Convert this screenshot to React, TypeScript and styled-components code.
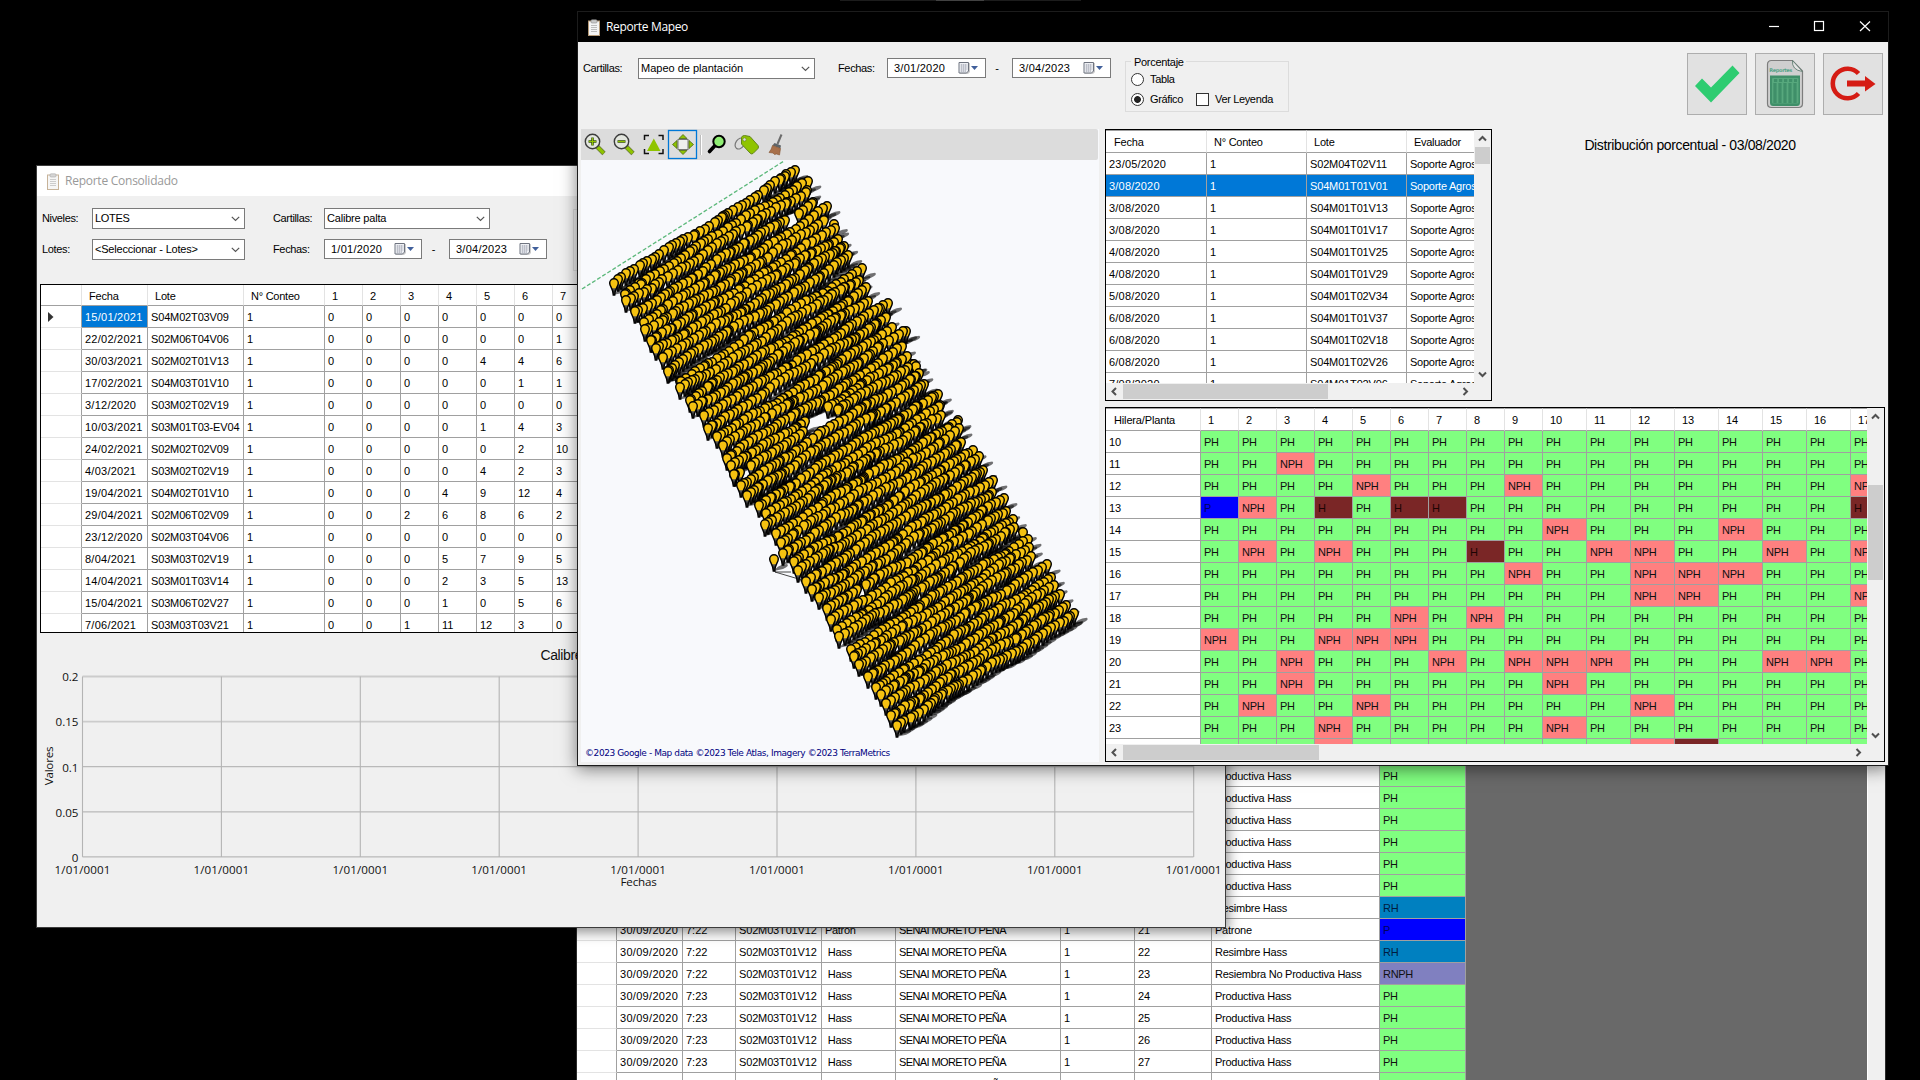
import React from "react";
import styled, { createGlobalStyle, css } from "styled-components";

const Global = createGlobalStyle`
  *, *::before, *::after { box-sizing: border-box; }
  html, body { margin: 0; padding: 0; background: #000; }
  body { overflow: hidden; font-family: "Liberation Sans", Arial, sans-serif; font-size: 11px; color: #000; }
`;

const Desktop = styled.div`
  position: relative;
  width: 1920px;
  height: 1080px;
  overflow: hidden;
  background: #000;
`;

const ScreenHandle = styled.div`
  position: absolute;
  left: 840px;
  top: 0;
  width: 241px;
  height: 1px;
  background: linear-gradient(90deg, #1d1d1d 96px, #444 96px, #444 144px, #1d1d1d 144px);
`;

/* ---------- windows ---------- */

const Window = styled.section<{ $x: number; $y: number; $w: number; $h: number; $edge: string; $shadow?: string }>`
  position: absolute;
  left: ${(p) => p.$x}px;
  top: ${(p) => p.$y}px;
  width: ${(p) => p.$w}px;
  height: ${(p) => p.$h}px;
  display: flex;
  flex-direction: column;
  background: #f0f0f0;
  border: 1px solid ${(p) => p.$edge};
  box-shadow: ${(p) => p.$shadow ?? "none"};
`;

const TitleBar = styled.header<{ $dark?: boolean }>`
  display: flex;
  align-items: center;
  flex: none;
  height: 30px;
  padding-left: 10px;
  gap: 7px;
  background: ${(p) => (p.$dark ? "#000" : "#fff")};
  color: ${(p) => (p.$dark ? "#fff" : "#999")};
  font: 12px "Open Sans", "Noto Sans", sans-serif;
`;

const TitleText = styled.span<{ $ls: number }>`
  margin-left: -1px;
  letter-spacing: ${(p) => p.$ls}px;
  line-height: 16px;
`;

const Caption = styled.div`
  display: flex;
  margin-left: auto;
  svg { display: block; width: 46px; height: 30px; }
`;

const ClipboardSvg = styled.svg<{ $faded?: boolean }>`
  width: 12px;
  height: 17px;
  opacity: ${(p) => (p.$faded ? 0.75 : 1)};
`;

function Clipboard({ faded }: { faded?: boolean }) {
  return (
    <ClipboardSvg $faded={faded} viewBox="0 0 12 17">
      <rect x="0.5" y="2" width="11" height="14.5" fill="#f4f4f4" stroke="#b59a78" />
      <rect x="3" y="0.8" width="6" height="3.2" rx="1" fill="#c9c9c9" stroke="#8b8b8b" strokeWidth="0.6" />
      <path d="M3 6.5h6M3 8.5h6M3 10.5h6M3 12.5h6" stroke="#b5b5b5" strokeWidth="0.9" />
    </ClipboardSvg>
  );
}

/* ---------- form controls ---------- */

const Label = styled.span<{ $w: number; $ls?: number }>`
  flex: none;
  width: ${(p) => p.$w}px;
  line-height: 21px;
  white-space: nowrap;
  letter-spacing: ${(p) => p.$ls ?? -0.35}px;
`;

const ComboBox = styled.div<{ $w: number }>`
  flex: none;
  display: flex;
  align-items: center;
  justify-content: space-between;
  width: ${(p) => p.$w}px;
  height: 21px;
  padding: 0 4px 1px 2px;
  background: #fff;
  border: 1px solid #7a7a7a;
  white-space: nowrap;
  svg { width: 9px; height: 6px; margin-top: 2px; }
`;

const Tight = styled.span<{ $ls: number }>`
  letter-spacing: ${(p) => p.$ls}px;
`;

function Combo({ w, ls = 0, children }: { w: number; ls?: number; children: string }) {
  return (
    <ComboBox $w={w}>
      <Tight $ls={ls}>{children}</Tight>
      <svg viewBox="0 0 9 6"><path d="M0.8 0.8L4.5 4.5L8.2 0.8" fill="none" stroke="#555" strokeWidth="1.2" /></svg>
    </ComboBox>
  );
}

const DateBox = styled.div<{ $w: number }>`
  flex: none;
  display: flex;
  align-items: center;
  width: ${(p) => p.$w}px;
  height: 20px;
  padding: 0 6px 0 6px;
  background: #fff;
  border: 1px solid #7a7a7a;
  letter-spacing: 0.25px;
  svg { margin-left: auto; width: 21px; height: 14px; }
`;

function DatePicker({ w, children }: { w: number; children: string }) {
  return (
    <DateBox $w={w}>
      {children}
      <svg viewBox="0 0 21 14">
        <path d="M2 2h10v9l-2 2H2z" fill="#aaa" opacity="0.6" />
        <path d="M1 1.5h9.5v8.5l-2 2H1z" fill="#eef0f4" stroke="#6f7480" />
        <path d="M2.5 4h7M2.5 6h7M2.5 8h7M2.5 10h5M3.5 3v8M5.5 3v8M7.5 3v8" stroke="#a7acb9" strokeWidth="0.6" />
        <path d="M13 5h7l-3.5 4z" fill="#41609b" />
      </svg>
    </DateBox>
  );
}

const Dash = styled.span<{ $w: number }>`
  flex: none;
  width: ${(p) => p.$w}px;
  line-height: 20px;
  text-align: center;
  padding-right: 4px;
`;

const GroupBox = styled.div`
  flex: none;
  width: 164px;
  height: 51px;
  margin: 3px 0 0 14px;
  padding: 0 5px;
  border: 1px solid #dcdcdc;
`;

const Legend = styled.div`
  width: fit-content;
  height: 11px;
  line-height: 13px;
  margin-top: -6px;
  padding: 0 2px 0 3px;
  background: #f0f0f0;
  letter-spacing: -0.3px;
`;

const OptionRow = styled.div<{ $top: number }>`
  display: flex;
  align-items: center;
  height: 14px;
  margin-top: ${(p) => p.$top}px;
  letter-spacing: -0.35px;
`;

const Radio = styled.span<{ $on?: boolean }>`
  width: 13px;
  height: 13px;
  margin-right: 6px;
  border: 1px solid #333;
  border-radius: 50%;
  background: ${(p) => (p.$on ? "radial-gradient(circle, #222 3px, #fff 3.8px)" : "#fff")};
`;

const CheckBox = styled.span`
  width: 13px;
  height: 13px;
  margin: 0 6px 0 13px;
  border: 1px solid #333;
  background: #fff;
`;

const Actions = styled.div`
  display: flex;
  gap: 8px;
  margin: -5px 5px 0 auto;
`;

const ActionButton = styled.div`
  width: 60px;
  height: 62px;
  background: #e1e1e1;
  border: 1px solid #adadad;
  svg { display: block; width: 58px; height: 60px; }
`;

/* ---------- data grids ---------- */

const GridFrame = styled.div<{ $w: number; $h: number }>`
  flex: none;
  display: grid;
  grid-template-columns: minmax(0, 1fr) auto;
  grid-template-rows: minmax(0, 1fr) auto;
  width: ${(p) => p.$w}px;
  height: ${(p) => p.$h}px;
  border: 1px solid #000;
  background: #f0f0f0;
`;

const Rows = styled.div`
  overflow: hidden;
  background: #fff;
`;

const Row = styled.div<{ $cols: string; $h?: number }>`
  display: grid;
  grid-template-columns: ${(p) => p.$cols};
  height: ${(p) => p.$h ?? 22}px;
`;

const Cell = styled.div<{ $bg?: string; $fg?: string; $ls?: number; $pad?: number; $blank?: boolean }>`
  overflow: hidden;
  padding-left: ${(p) => p.$pad ?? 3}px;
  line-height: 23px;
  white-space: pre;
  border-right: 1px solid #a0a0a0;
  border-bottom: 1px solid ${(p) => (p.$blank ? "#e3e3e3" : "#a0a0a0")};
  background: ${(p) => p.$bg ?? "#fff"};
  color: ${(p) => p.$fg ?? "#000"};
  letter-spacing: ${(p) => p.$ls ?? 0}px;
`;

const HeadCell = styled(Cell)<{ $top?: boolean }>`
  padding-left: ${(p) => p.$pad ?? 7}px;
  border-right-color: #e3e3e3;
  ${(p) => p.$top && css`border-top: 1px solid #a0a0a0;`}
`;

const ScrollV = styled.div`
  display: flex;
  flex-direction: column;
  align-items: center;
  width: 17px;
  padding-right: 1px;
  background: #f0f0f0;
`;
const ScrollH = styled.div`
  display: flex;
  align-items: center;
  height: 17px;
  padding-bottom: 1px;
  grid-column: 1;
`;
const ThumbV = styled.div<{ $top: number; $len: number }>`
  width: 15px;
  height: ${(p) => p.$len}px;
  margin-top: ${(p) => p.$top}px;
  background: #cdcdcd;
`;
const ThumbH = styled.div<{ $len: number }>`
  width: ${(p) => p.$len}px;
  height: 15px;
  background: #cdcdcd;
`;
const ArrowSvg = styled.svg<{ $end?: boolean }>`
  flex: none;
  width: 17px;
  height: 17px;
  ${(p) => p.$end && css`margin-top: auto;`}
`;
const ArrowRight = styled(ArrowSvg)`
  margin-left: auto;
`;

const Chevron = (d: string) => <path d={d} fill="none" stroke="#505050" strokeWidth="2" />;
const UP = "M5 10.5L8.5 7L12 10.5";
const DOWN = "M5 6.5L8.5 10L12 6.5";
const LEFT = "M10 5L6.5 8.5L10 12";
const RIGHT = "M6.5 5L10 8.5L6.5 12";

function VBar({ top, len }: { top: number; len: number }) {
  return (
    <ScrollV>
      <ArrowSvg viewBox="0 0 17 17">{Chevron(UP)}</ArrowSvg>
      <ThumbV $top={top} $len={len} />
      <ArrowSvg $end viewBox="0 0 17 17">{Chevron(DOWN)}</ArrowSvg>
    </ScrollV>
  );
}
function HBar({ len }: { len: number }) {
  return (
    <ScrollH>
      <ArrowSvg viewBox="0 0 17 17">{Chevron(LEFT)}</ArrowSvg>
      <ThumbH $len={len} />
      <ArrowRight viewBox="0 0 17 17">{Chevron(RIGHT)}</ArrowRight>
    </ScrollH>
  );
}

/* ---------- detail window (back) ---------- */

const GREEN = "#80ff80";
const CODE_COLORS: Record<string, string> = {
  PH: GREEN, NPH: "#ff8080", H: "#7a2626", P: "#0000ff", RH: "#0080c0", RNPH: "#8080c0",
};
const codeText = (c: string) => (c === "P" ? "#000060" : c === "H" ? "#1c0404" : c === "RH" ? "#001c40" : "#101010");

const DETAIL_COLS = "40px 66px 53px 86px 74px 165px 74px 77px 168px 86px";
const detail: [string, string, string, string, string][] = [
  ["7:22", " Hass", "14", "Productiva Hass", "PH"],
  ["7:22", " Hass", "15", "Productiva Hass", "PH"],
  ["7:22", " Hass", "16", "Productiva Hass", "PH"],
  ["7:22", " Hass", "17", "Productiva Hass", "PH"],
  ["7:22", " Hass", "18", "Productiva Hass", "PH"],
  ["7:22", " Hass", "19", "Productiva Hass", "PH"],
  ["7:22", " Hass", "20", "Resimbre Hass", "RH"],
  ["7:22", "Patron", "21", "Patrone", "P"],
  ["7:22", " Hass", "22", "Resimbre Hass", "RH"],
  ["7:22", " Hass", "23", "Resiembra No Productiva Hass", "RNPH"],
  ["7:23", " Hass", "24", "Productiva Hass", "PH"],
  ["7:23", " Hass", "25", "Productiva Hass", "PH"],
  ["7:23", " Hass", "26", "Productiva Hass", "PH"],
  ["7:23", " Hass", "27", "Productiva Hass", "PH"],
  ["7:23", " Hass", "28", "Productiva Hass", "PH"],
];

const DetailBody = styled.div`
  flex: none;
  width: 1291px;
  height: 336px;
  margin-top: 24px;
  overflow: hidden;
  background: #696969;
  border-right: 1px solid #fff;
`;

function DetailWindow() {
  return (
    <Window $x={576} $y={740} $w={1310} $h={362} $edge="#2b2b2b">
      <DetailBody>
        {detail.map(([time, kind, plant, state, code]) => (
          <Row key={plant} $cols={DETAIL_COLS}>
            <Cell $blank />
            <Cell $ls={0.3}>30/09/2020</Cell>
            <Cell>{time}</Cell>
            <Cell $ls={-0.15}>S02M03T01V12</Cell>
            <Cell $ls={-0.3}>{kind}</Cell>
            <Cell $ls={-0.6}>SENAI MORETO PEÑA</Cell>
            <Cell>1</Cell>
            <Cell>{plant}</Cell>
            <Cell $ls={-0.25}>{state}</Cell>
            <Cell $bg={CODE_COLORS[code]} $fg={codeText(code)} $ls={-0.3}>{code}</Cell>
          </Row>
        ))}
      </DetailBody>
    </Window>
  );
}

/* ---------- consolidated window (middle) ---------- */

const CONS_COLS = "41px 66px 96px 81px repeat(8, 38px)";
const consolidated: [string, string, number[]][] = [
  ["15/01/2021", "S04M02T03V09", [0, 0, 0, 0, 0, 0, 0]],
  ["22/02/2021", "S02M06T04V06", [0, 0, 0, 0, 0, 0, 1]],
  ["30/03/2021", "S02M02T01V13", [0, 0, 0, 0, 4, 4, 6]],
  ["17/02/2021", "S04M03T01V10", [0, 0, 0, 0, 0, 1, 1]],
  ["3/12/2020", "S03M02T02V19", [0, 0, 0, 0, 0, 0, 0]],
  ["10/03/2021", "S03M01T03-EV04", [0, 0, 0, 0, 1, 4, 3]],
  ["24/02/2021", "S02M02T02V09", [0, 0, 0, 0, 0, 2, 10]],
  ["4/03/2021", "S03M02T02V19", [0, 0, 0, 0, 4, 2, 3]],
  ["19/04/2021", "S04M02T01V10", [0, 0, 0, 4, 9, 12, 4]],
  ["29/04/2021", "S02M06T02V09", [0, 0, 2, 6, 8, 6, 2]],
  ["23/12/2020", "S02M03T04V06", [0, 0, 0, 0, 0, 0, 0]],
  ["8/04/2021", "S03M03T02V19", [0, 0, 0, 5, 7, 9, 5]],
  ["14/04/2021", "S03M01T03V14", [0, 0, 0, 2, 3, 5, 13]],
  ["15/04/2021", "S03M06T02V27", [0, 0, 0, 1, 0, 5, 6]],
  ["7/06/2021", "S03M03T03V21", [0, 0, 1, 11, 12, 3, 0]],
];

const Filters = styled.div`
  display: grid;
  grid-template-columns: 50px 153px 28px 51px 1fr;
  grid-template-rows: 21px 21px;
  row-gap: 10px;
  height: 88px;
  padding: 12px 0 0 5px;
`;
const Line = styled.div`
  display: flex;
`;
const ConsTable = styled.div`
  flex: none;
  width: 560px;
  height: 349px;
  margin-left: 3px;
  border: 1px solid #000;
  background: #fff;
  overflow: hidden;
`;
const Pointer = styled.svg`
  display: block;
  width: 6px;
  height: 10px;
  margin: 6px 0 0 4px;
`;
const ChartSvg = styled.svg`
  display: block;
  width: 1187px;
  height: 292px;
  text { font-family: "Open Sans", sans-serif; font-size: 11.6px; fill: #111; }
`;
const SidePanel = styled.div`
  width: 200px;
  height: 62px;
  margin: -30px 0 0 26px;
  border: 1px solid #dcdcdc;
`;

function Chart() {
  const x0 = 45.5;
  const y0 = 43.5;
  const labels = ["0.2", "0.15", "0.1", "0.05", "0"];
  return (
    <ChartSvg viewBox="0 0 1187 292">
      {labels.map((t, i) => (
        <g key={t}>
          <path d={`M${x0} ${y0 + i * 45.1}H1156.5`} stroke={i < 2 ? "#ccc" : "#b9b9b9"} strokeWidth={i < 2 ? 1.8 : 1.2} />
          <text x="41.5" y={y0 + i * 45.1 + 4.8} textAnchor="end">{t}</text>
        </g>
      ))}
      {Array.from({ length: 9 }, (_, i) => (
        <g key={i}>
          <path d={`M${x0 + i * 138.9} ${y0}V${y0 + 180.4}`} stroke="#b4b4b4" strokeWidth="1.1" />
          <text x={x0 + i * 138.9} y="241" textAnchor="middle" letterSpacing="0.1">1/01/0001</text>
        </g>
      ))}
      <text x="601.5" y="253" textAnchor="middle" letterSpacing="-0.2">Fechas</text>
      <text transform="translate(16 133) rotate(-90)" textAnchor="middle" letterSpacing="-0.2">Valores</text>
      <text x="503.5" y="27" style={{ fontFamily: "Liberation Sans", fontSize: 14 }} letterSpacing="-0.4">Calibre palta</text>
    </ChartSvg>
  );
}

function ConsolidatedWindow() {
  return (
    <Window $x={36} $y={165} $w={1190} $h={763} $edge="#3c3c3c" $shadow="2px 4px 12px rgba(0,0,0,.45)">
      <TitleBar>
        <Clipboard faded />
        <TitleText $ls={-0.25}>Reporte Consolidado</TitleText>
      </TitleBar>
      <Filters>
        <Label $w={49}>Niveles:</Label>
        <Combo w={153} ls={-0.3}>LOTES</Combo>
        <span />
        <Label $w={51}>Cartillas:</Label>
        <Line><Combo w={166} ls={-0.2}>Calibre palta</Combo></Line>
        <Label $w={49}>Lotes:</Label>
        <Combo w={153} ls={-0.2}>{"<Seleccionar - Lotes>"}</Combo>
        <span />
        <Label $w={51}>Fechas:</Label>
        <Line>
          <DatePicker w={98}>1/01/2020</DatePicker>
          <Dash $w={27}>-</Dash>
          <DatePicker w={98}>3/04/2023</DatePicker>
          <SidePanel />
        </Line>
      </Filters>
      <ConsTable>
        <Row $cols={CONS_COLS} $h={21}>
          <HeadCell />
          <HeadCell $ls={-0.2}>Fecha</HeadCell>
          <HeadCell $ls={-0.2}>Lote</HeadCell>
          <HeadCell $ls={-0.25}>N° Conteo</HeadCell>
          {["1", "2", "3", "4", "5", "6", "7", "8"].map((n) => <HeadCell key={n}>{n}</HeadCell>)}
        </Row>
        {consolidated.map(([date, lot, values], i) => (
          <Row key={i} $cols={CONS_COLS}>
            <Cell $blank>{i === 0 && <Pointer viewBox="0 0 6 10"><path d="M0 0L5.5 5L0 10z" fill="#333" /></Pointer>}</Cell>
            <Cell $bg={i === 0 ? "#0078d7" : undefined} $fg={i === 0 ? "#fff" : undefined} $ls={0.25}>{date}</Cell>
            <Cell $ls={-0.15}>{lot}</Cell>
            <Cell>1</Cell>
            {values.map((v, k) => <Cell key={k}>{String(v)}</Cell>)}
            <Cell>0</Cell>
          </Row>
        ))}
      </ConsTable>
      <Chart />
    </Window>
  );
}

/* ---------- map ---------- */

function seeded(seed: number) {
  let s = seed;
  return () => {
    s = (s * 1664525 + 1013904223) % 4294967296;
    return s / 4294967296;
  };
}

/* Pin heads, in map coordinates (origin at the top left of the drawing area). */
function buildPins() {
  const rnd = seeded(77);
  const pins: { x: number; y: number }[] = [];
  const rows = 47;
  const holes: [number, number, number, number][] = [
    [240, 259, 19, 8], [282, 430, 4, 4], [399, 373, 4, 4], [211, 55, 4, 4], [337, 440, 4, 4], [163, 308, 6, 4],
  ];
  for (let r = 0; r < rows; r++) {
    const t = r / (rows - 1);
    const lx = 35 + t * 281 + (rnd() - 0.5) * 8;
    const ly = 123 + t * 441 + (rnd() - 0.5) * 2.5;
    const len = 0.985 + rnd() * 0.045;
    const dx = (182 - 7 * t) * len;
    const dy = -(112 - 2 * t) * len;
    const wave = rnd() * 6;
    let u = 0;
    while (u <= 1) {
      const x = lx + dx * u;
      const y = ly + dy * u + Math.sin(u * 8 + wave) * 1.6 + Math.sin(u * 23 + wave * 3) * 0.9 + (rnd() - 0.5) * 1.2;
      const a = 0.53;
      const hit = holes.some(([hx, hy, rx, ry]) => {
        const px = (x - hx) * Math.cos(a) - (y - hy) * Math.sin(a);
        const py = (x - hx) * Math.sin(a) + (y - hy) * Math.cos(a);
        return (px / rx) ** 2 + (py / ry) ** 2 < 1;
      });
      if (!hit) pins.push({ x, y });
      u += rnd() < 0.12 ? 0.006 : 0.016 + rnd() * 0.014;
    }
  }
  pins.push({ x: 193, y: 399 });
  pins.push({ x: 335, y: 206 });
  pins.push({ x: 253, y: 64 });
  pins.push({ x: 442, y: 372 });
  return pins.sort((p, q) => p.y - q.y);
}
const pins = buildPins();

const MapPanel = styled.div`
  flex: none;
  display: flex;
  flex-direction: column;
  width: 518px;
  height: 633px;
  background: #f8f9fc;
`;
const ToolStrip = styled.div`
  display: flex;
  align-items: center;
  flex: none;
  width: 517px;
  height: 31px;
  background: #dcdcdc;
  border-radius: 0 2px 2px 0;
`;
const Tools = styled.svg`
  display: block;
  width: 220px;
  height: 31px;
`;
const MapSvg = styled.svg`
  display: block;
  flex: none;
  width: 518px;
  height: 585px;
`;
const Copyright = styled.div`
  padding-left: 4px;
  color: #000080;
  font: 9px/16px "DejaVu Sans", sans-serif;
  letter-spacing: -0.42px;
  white-space: nowrap;
`;

function MapView() {
  return (
    <MapPanel>
      <ToolStrip>
        <Tools viewBox="0 0 220 31">
          {[0, 29].map((dx) => (
            <g key={dx} transform={`translate(${dx} 0)`}>
              <path d="M15 16.5L23 24.5" stroke="#6b7a3a" strokeWidth="4.6" />
              <path d="M15.5 17L22.6 24.1" stroke="#8fc400" strokeWidth="3.2" />
              <circle cx="11.5" cy="12.5" r="7.2" fill="#e3e6df" stroke="#3c3c3c" strokeWidth="1.4" />
              <path d={dx ? "M7.5 12.5h8" : "M7.5 12.5h8M11.5 8.5v8"} stroke="#3f5a12" strokeWidth="2.6" />
              <path d={dx ? "M8 12.5h7" : "M8 12.5h7M11.5 9v7"} stroke="#8fc400" strokeWidth="1" />
            </g>
          ))}
          <path d="M68 6.5h-4.5V11M77.500 6.500h4.500V11M68 24.500h-4.500V20M77.500 24.500h4.500V20" fill="none" stroke="#111" strokeWidth="1.5" />
          <path d="M72.800 9.500L79.500 22H66z" fill="#8fc400" />
          <rect x="87.500" y="1.500" width="28" height="28" fill="#dedede" stroke="#0078d7" strokeWidth="1.3" />
          <rect x="97" y="10.500" width="10" height="10" fill="#eee" stroke="#777" strokeWidth="1" />
          <path d="M98 9.500L102 5.500l4 4zM98 21.500l4 4 4-4zM96 11.500l-4.500 4 4.500 4zM108 11.500l4.500 4-4.500 4z" fill="#8fc400" stroke="#4d6618" strokeWidth="0.8" />
          <path d="M119.500 6v20" stroke="#bdbdbd" />
          <path d="M120.500 6v20" stroke="#fff" />
          <path d="M134.500 16L128.500 22.500" stroke="#000" strokeWidth="3.6" strokeLinecap="round" />
          <circle cx="138" cy="12.500" r="5.700" fill="#90ee74" stroke="#000" strokeWidth="2" />
          <ellipse cx="159" cy="14.500" rx="4.300" ry="6" transform="rotate(35 159 14.500)" fill="none" stroke="#777" strokeWidth="1.200" />
          <path d="M160.500 8.500Q161 6.500 163.500 6.500L169 7.500L177 16.500Q178 18 177 19.500L172 24.500Q170.500 25.500 169 24L160.500 15z" fill="#8fc400" stroke="#64861a" strokeWidth="1" />
          <circle cx="163.500" cy="10.500" r="1.700" fill="#dcdcdc" stroke="#64861a" strokeWidth="0.700" />
          <path d="M200.500 5.500L196.500 15" stroke="#6b6b6b" strokeWidth="2" />
          <path d="M193.500 14l6.500 2.500-.6 3-8-3z" fill="#5e6468" />
          <path d="M191.500 16.500l8 3-1 6.500-3-1-2 .5-1.500-1.500-4-.5q2.500-3 3.500-7z" fill="#a8704a" stroke="#83532f" strokeWidth="0.600" />
        </Tools>
      </ToolStrip>
      <MapSvg viewBox="0 0 518 585">
        <defs>
          <linearGradient id="tail" x1="0" y1="0" x2="0" y2="1">
            <stop offset="0.55" stopColor="#f5c211" />
            <stop offset="0.62" stopColor="#555" />
            <stop offset="1" stopColor="#111" />
          </linearGradient>
          <filter id="soft" x="-30%" y="-60%" width="160%" height="220%">
            <feGaussianBlur stdDeviation="0.7" />
          </filter>
          <symbol id="pin" overflow="visible">
            <path d="M-4.300 0A4.300 4.300 0 1 1 4.300 0C4.300 3.800 .9 5 .7 12H-.7C-.9 5-4.300 3.800-4.300 0Z" fill="url(#tail)" stroke="#000" strokeWidth="1.450" />
          </symbol>
        </defs>
        <path d="M1 129L203 1" stroke="#5bb87a" strokeWidth="1.300" strokeDasharray="4 2" />
        <g filter="url(#soft)">
          {pins.map((p, i) => (
            <path key={i} d={`M${p.x.toFixed(1)} ${(p.y + 12).toFixed(1)}q3-6 13-7q3 2-4 5z`} fill="#000" opacity="0.55" />
          ))}
        </g>
        <path d="M193 405L194 412L221 420M194 412h16M60 160l16 22M170 340l14 16M280 507l12 16" stroke="#333" strokeWidth="0.900" fill="none" />
        {pins.map((p, i) => (
          <use key={i} href="#pin" x={Math.round(p.x)} y={Math.round(p.y)} />
        ))}
      </MapSvg>
      <Copyright>©2023 Google - Map data ©2023 Tele Atlas, Imagery ©2023 TerraMetrics</Copyright>
    </MapPanel>
  );
}

/* ---------- mapping window (front) ---------- */

const VISIT_COLS = "101px 100px 100px 100px";
const visits: [string, string][] = [
  ["23/05/2020", "S02M04T02V11"],
  ["3/08/2020", "S04M01T01V01"],
  ["3/08/2020", "S04M01T01V13"],
  ["3/08/2020", "S04M01T01V17"],
  ["4/08/2020", "S04M01T01V25"],
  ["4/08/2020", "S04M01T01V29"],
  ["5/08/2020", "S04M01T02V34"],
  ["6/08/2020", "S04M01T01V37"],
  ["6/08/2020", "S04M01T02V18"],
  ["6/08/2020", "S04M01T02V26"],
  ["7/08/2020", "S04M01T02V06"],
];

const PLANT_COLS = "95px repeat(9, 38px) repeat(8, 44px)";
/* Cells that differ from a productive plant, by row: column number -> code. */
const exceptions: Record<number, Record<number, string>> = {
  10: {},
  11: { 3: "NPH" },
  12: { 5: "NPH", 9: "NPH", 17: "NPH" },
  13: { 1: "P", 2: "NPH", 4: "H", 6: "H", 7: "H", 17: "H" },
  14: { 10: "NPH", 14: "NPH" },
  15: { 2: "NPH", 4: "NPH", 8: "H", 11: "NPH", 12: "NPH", 15: "NPH", 17: "NPH" },
  16: { 9: "NPH", 12: "NPH", 13: "NPH", 14: "NPH" },
  17: { 12: "NPH", 13: "NPH", 17: "NPH" },
  18: { 6: "NPH", 8: "NPH" },
  19: { 1: "NPH", 4: "NPH", 5: "NPH", 6: "NPH" },
  20: { 3: "NPH", 7: "NPH", 9: "NPH", 10: "NPH", 11: "NPH", 15: "NPH", 16: "NPH" },
  21: { 3: "NPH", 10: "NPH" },
  22: { 2: "NPH", 5: "NPH", 12: "NPH" },
  23: { 4: "NPH", 10: "NPH" },
  24: { 4: "NPH", 12: "NPH", 13: "H" },
};

const TopArea = styled.div`
  display: flex;
  flex: none;
  height: 87px;
  padding: 16px 0 0 5px;
`;
const Gap = styled.span<{ $w: number }>`
  flex: none;
  width: ${(p) => p.$w}px;
`;
const Content = styled.div`
  display: flex;
  gap: 6px;
  padding-left: 3px;
`;
const RightColumn = styled.div`
  display: flex;
  flex-direction: column;
  gap: 6px;
  width: 783px;
`;
const Upper = styled.div`
  display: flex;
`;
const PieTitle = styled.div`
  flex: 1;
  padding-top: 8px;
  text-align: center;
  font-size: 14px;
  line-height: 16px;
  letter-spacing: -0.38px;
`;

function MappingWindow() {
  const plants = Array.from({ length: 17 }, (_, i) => i + 1);
  return (
    <Window $x={577} $y={11} $w={1312} $h={755} $edge="#1c1c1c" $shadow="0 3px 16px rgba(0,0,0,.5)">
      <TitleBar $dark>
        <Clipboard />
        <TitleText $ls={-0.35}>Reporte Mapeo</TitleText>
        <Caption>
          <svg viewBox="0 0 46 30"><path d="M19 14.500h10" stroke="#fff" strokeWidth="1.200" /></svg>
          <svg viewBox="0 0 46 30"><rect x="18.500" y="9.500" width="9" height="9" fill="none" stroke="#fff" strokeWidth="1.200" /></svg>
          <svg viewBox="0 0 46 30"><path d="M18 9.500l10 9.500M28 9.500l-10 9.500" stroke="#fff" strokeWidth="1.200" /></svg>
        </Caption>
      </TitleBar>
      <TopArea>
        <Label $w={55}>Cartillas:</Label>
        <Combo w={177}>Mapeo de plantación</Combo>
        <Gap $w={23} />
        <Label $w={49}>Fechas:</Label>
        <DatePicker w={99}>3/01/2020</DatePicker>
        <Dash $w={26}>-</Dash>
        <DatePicker w={99}>3/04/2023</DatePicker>
        <GroupBox>
          <Legend>Porcentaje</Legend>
          <OptionRow $top={5}><Radio />Tabla</OptionRow>
          <OptionRow $top={6}><Radio $on />Gráfico<CheckBox />Ver Leyenda</OptionRow>
        </GroupBox>
        <Actions>
          <ActionButton>
            <svg viewBox="0 0 58 60"><path d="M7 32l7-7.500L23 33.500L44.500 11.500L51.500 19L23 48.500z" fill="#2ecc71" /></svg>
          </ActionButton>
          <ActionButton>
            <svg viewBox="0 0 58 60">
              <path d="M15.500 6.500H36.500L46.500 17V49.500Q46.500 53.500 42.500 53.500H15.500Q11.500 53.500 11.500 49.500V10.500Q11.500 6.500 15.500 6.500Z" fill="#cfcfcf" stroke="#7d7d7d" strokeWidth="1.200" />
              <path d="M36.500 6.500Q35.500 16 46.500 17.500z" fill="#e4e4e4" stroke="#5e7d70" strokeWidth="0.900" />
              <path d="M14 21.500H44V48.500Q44 52 41 52H17Q14 52 14 48.500z" fill="#3f8f69" />
              <rect x="16" y="24" width="26.500" height="25.500" rx="1" fill="#57a87d" />
              <path d="M18 29v20M23 29v20M28 29v20M33 29v20M38 29v20" stroke="#3f8f69" strokeWidth="3.200" transform="translate(1 0)" />
              <path d="M18 26.500h23" stroke="#3f8f69" strokeWidth="3" strokeDasharray="3.200 1.800" />
              <text x="13.300" y="18.200" fontFamily="DejaVu Sans" fontWeight="bold" fontSize="5" fill="#57a58a" textLength="23">Reportes</text>
            </svg>
          </ActionButton>
          <ActionButton>
            <svg viewBox="0 0 58 60">
              <path d="M34.500 20A14.800 14.800 0 1 0 34.500 40" transform="translate(0 -0.500)" fill="none" stroke="#d51c14" strokeWidth="4.600" />
              <path d="M23 26.500H41V22L51.500 30L41 37.500V32.500H23z" fill="#d51c14" />
            </svg>
          </ActionButton>
        </Actions>
      </TopArea>
      <Content>
        <MapView />
        <RightColumn>
          <Upper>
            <GridFrame $w={387} $h={272}>
              <Rows>
                <Row $cols={VISIT_COLS} $h={23}>
                  <HeadCell $top $pad={8} $ls={-0.2}>Fecha</HeadCell>
                  <HeadCell $top $ls={-0.25}>N° Conteo</HeadCell>
                  <HeadCell $top $ls={-0.2}>Lote</HeadCell>
                  <HeadCell $top $ls={-0.3}>Evaluador</HeadCell>
                </Row>
                {visits.map(([date, lot], i) => {
                  const sel = i === 1 ? { $bg: "#0078d7", $fg: "#fff" } : {};
                  return (
                    <Row key={i} $cols={VISIT_COLS}>
                      <Cell {...sel} $ls={0.2}>{date}</Cell>
                      <Cell {...sel}>1</Cell>
                      <Cell {...sel} $ls={-0.15}>{lot}</Cell>
                      <Cell {...sel} $ls={-0.25}>Soporte Agrosoft</Cell>
                    </Row>
                  );
                })}
              </Rows>
              <VBar top={0} len={17} />
              <HBar len={205} />
            </GridFrame>
            <PieTitle>Distribución porcentual - 03/08/2020</PieTitle>
          </Upper>
          <GridFrame $w={780} $h={355}>
            <Rows>
              <Row $cols={PLANT_COLS} $h={23}>
                <HeadCell $top $pad={8} $ls={-0.15}>Hilera/Planta</HeadCell>
                {plants.map((n) => <HeadCell $top key={n}>{n}</HeadCell>)}
              </Row>
              {Object.entries(exceptions).map(([row, marks]) => (
                <Row key={row} $cols={PLANT_COLS}>
                  <Cell>{row}</Cell>
                  {plants.map((n) => {
                    const code = marks[n] ?? "PH";
                    return (
                      <Cell key={n} $bg={CODE_COLORS[code]} $fg={codeText(code)} $ls={-0.3}>{code}</Cell>
                    );
                  })}
                </Row>
              ))}
            </Rows>
            <VBar top={60} len={95} />
            <HBar len={196} />
          </GridFrame>
        </RightColumn>
      </Content>
    </Window>
  );
}

export default function App() {
  return (
    <Desktop>
      <Global />
      <ScreenHandle />
      <DetailWindow />
      <ConsolidatedWindow />
      <MappingWindow />
    </Desktop>
  );
}
